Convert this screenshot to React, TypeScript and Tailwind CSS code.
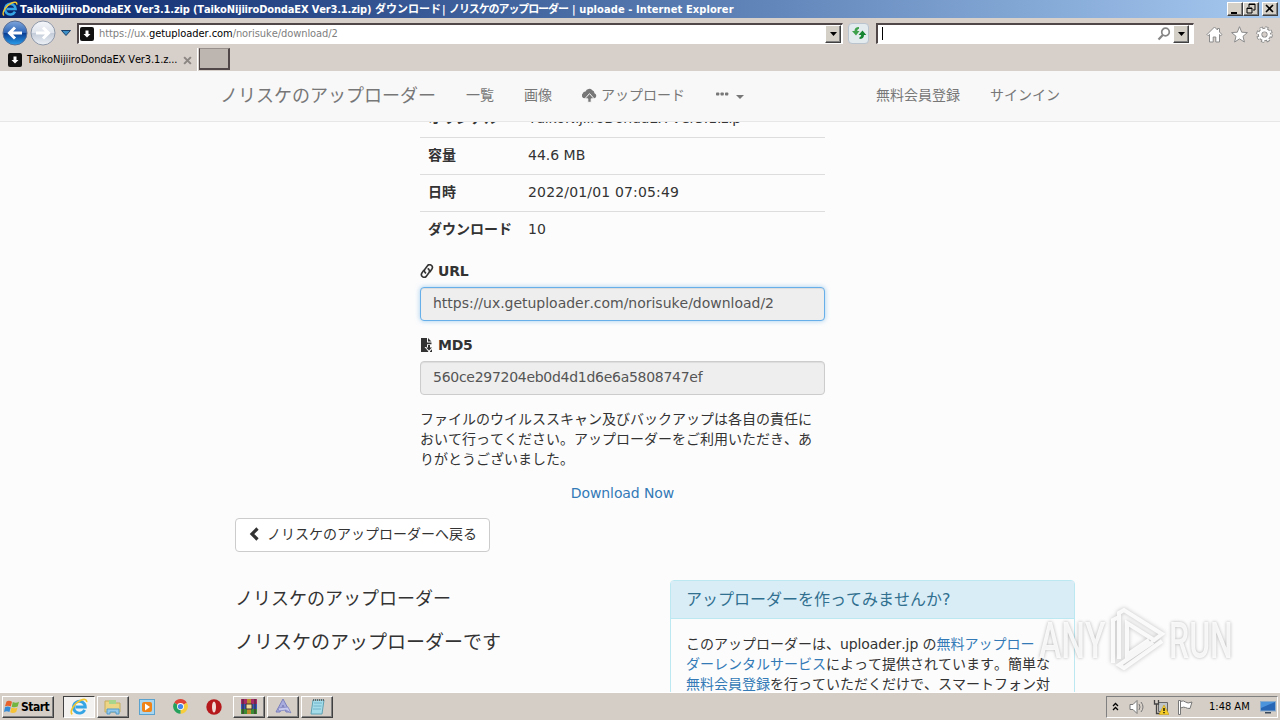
import type { ReactNode } from 'react';

const fileRows = [
  { label: 'オリジナル', value: 'TaikoNijiiroDondaEX Ver3.1.zip', spacing: 'tracking-[-0.15px]' },
  { label: '容量', value: '44.6 MB', spacing: '' },
  { label: '日時', value: '2022/01/01 07:05:49', spacing: 'tracking-[0.16px]' },
  { label: 'ダウンロード', value: '10', spacing: '' },
];

const raised =
  'border border-t-white border-l-white border-r-[#404040] border-b-[#404040] shadow-[inset_-1px_-1px_0_#808080]';

function Favicon() {
  return (
    <svg className="size-[14px] shrink-0" viewBox="0 0 14 14">
      <rect width="14" height="14" rx="2" fill="#111" />
      <path d="M5.500 3.500h3V7h2L7 10.500 3.500 7h2z" fill="#fff" />
    </svg>
  );
}

function IeLogo({ className }: { className: string }) {
  return (
    <svg className={className} viewBox="0 0 20 20">
      <path
        d="M16.3 13.2A6.6 6.6 0 1 1 17 10H6"
        fill="none"
        stroke="#35a5e5"
        strokeWidth="3.2"
      />
      <path
        d="M2.500 18.200C-1 15 5 5.500 12 2.500c3.500-1.500 7-1.500 6.500 2"
        fill="none"
        stroke="#f3c62f"
        strokeWidth="1.8"
      />
    </svg>
  );
}

function NavArrow({ active }: { active?: boolean }) {
  return (
    <svg className="size-[26px] shrink-0" viewBox="0 0 26 26">
      <defs>
        <linearGradient id={active ? 'navOn' : 'navOff'} x1="0" y1="0" x2="0" y2="1">
          <stop offset="0" stopColor={active ? '#7fa6dc' : '#f4f6fa'} />
          <stop offset="0.48" stopColor={active ? '#2f66b8' : '#dfe4ec'} />
          <stop offset="0.52" stopColor={active ? '#0b3f94' : '#c3ccd8'} />
          <stop offset="1" stopColor={active ? '#2aa0ee' : '#eef2f8'} />
        </linearGradient>
      </defs>
      <circle cx="13" cy="13" r="12" fill={active ? 'url(#navOn)' : 'url(#navOff)'} stroke={active ? '#5b6f94' : '#8e98a8'} />
      <path
        d={active ? 'M20 13H8M13 7.500L7.500 13l5.500 5.500' : 'M6 13h12M13 7.500l5.500 5.500-5.500 5.500'}
        fill="none"
        stroke="#fff"
        strokeWidth="3"
      />
    </svg>
  );
}

function DropButton() {
  return (
    <div className={`flex h-[18px] w-4 shrink-0 items-center justify-center bg-[#d4d0c8] ${raised}`}>
      <svg className="h-1 w-[7px]" viewBox="0 0 7 4">
        <path d="M0 0h7L3.500 4z" fill="#000" />
      </svg>
    </div>
  );
}

function WindowButton({ children }: { children: ReactNode }) {
  return (
    <div className={`h-[14px] w-4 bg-[#d4d0c8] ${raised}`}>
      <svg className="h-3 w-[14px]" viewBox="0 0 14 12">{children}</svg>
    </div>
  );
}

function TitleBar() {
  return (
    <div className="flex h-[18px] shrink-0 items-center bg-linear-to-r from-[#0a246a] to-[#a6caf0] pr-[2px] pl-[2px] text-white">
      <IeLogo className="size-4" />
      <div className="ml-[2px] flex pt-px text-[11px] leading-[17px] font-bold whitespace-pre">
        <span className="w-[355px] tracking-[-0.15px]">TaikoNijiiroDondaEX Ver3.1.zip (TaikoNijiiroDondaEX Ver3.1.zip)</span>
        <span className="w-[67px]">ダウンロード</span>
        <span className="w-[7px]">|</span>
        <span className="w-[123px] tracking-[-1.1px]">ノリスケのアップローダー</span>
        <span className="tracking-[0.1px]">| uploade - Internet Explorer</span>
      </div>
      <div className="ml-auto flex">
        <WindowButton><path d="M3 9h6v2H3z" /></WindowButton>
        <WindowButton>
          <path d="M5 1h6v6H9M5 1v3M3 5h5v5H3zM5 1.500h6M3 5.500h5" fill="none" stroke="#000" />
        </WindowButton>
        <div className="ml-[3px]">
          <WindowButton><path d="M3 2l7 7M10 2L3 9" stroke="#000" strokeWidth="1.600" /></WindowButton>
        </div>
      </div>
    </div>
  );
}

function AddressRow() {
  return (
    <div className="flex h-[30px] shrink-0 items-center">
      <div className="flex w-[77px] items-center gap-[2px] pl-[2px]">
        <NavArrow active />
        <NavArrow />
        <svg className="ml-[3px] h-[6px] w-[10px]" viewBox="0 0 10 6">
          <path d="M.5.500h9L5 5.500z" fill="#3c8fc4" stroke="#173f69" />
        </svg>
      </div>
      <div className="flex h-[21px] w-[766px] items-center border-t-2 border-l-2 border-t-[#504848] border-l-[#504848] border-r border-b border-r-white border-b-white bg-white pr-px pl-px">
        <Favicon />
        <div className="ml-[5px] pt-px text-[11px] text-[#808080]">
          <span className="tracking-[-0.07px]">https://ux.</span>
          <span className="text-black tracking-[-0.05px]">getuploader.com</span>
          <span className="tracking-[-0.07px]">/norisuke/download/2</span>
        </div>
        <div className="ml-auto"><DropButton /></div>
      </div>
      <div className="ml-[5px] flex size-[21px] items-center justify-center rounded-sm border border-[#b9c4ce] bg-[#e4ebef]">
        <svg className="size-4" viewBox="0 0 16 16">
          <path d="M8 2Q3.500 2 3.500 6H1l4 4.500L8.500 6H6.200Q6.200 4 8 3.800z" fill="#3fa14c" />
          <path d="M8.500 14Q13 14 13 10h2.300L11.500 5.500 7.500 10h2.700Q10.200 12 8.500 12.200z" fill="#168531" />
        </svg>
      </div>
      <div className="ml-[7px] flex h-[21px] w-[318px] items-center border-t-2 border-l-2 border-t-[#504848] border-l-[#504848] border-r border-b border-r-white border-b-white bg-white pr-1 pl-1">
        <div className="h-[13px] w-px bg-black" />
        <svg className="mr-[2px] ml-auto size-[14px]" viewBox="0 0 14 14" fill="none" stroke="#858585">
          <circle cx="8.500" cy="5" r="3.800" strokeWidth="1.700" />
          <path d="M5.800 8L1.500 12.500" strokeWidth="2.200" />
        </svg>
        <DropButton />
      </div>
      <div className="ml-[12px] flex gap-[8px]">
        <svg className="mt-[3px] size-[17px]" viewBox="0 0 17 17" fill="#fff" stroke="#8b8b8b">
          <path d="M8.500 1L1 8.500l1.200 1.200L3.500 8.500V16h3.700v-5h2.600v5h3.700V8.500l1.300 1.200L16 8.500l-2.500-2.500V2.500h-2V4z" />
        </svg>
        <svg className="mt-[3px] size-[17px]" viewBox="0 0 17 17" fill="#fff" stroke="#8b8b8b">
          <path d="M8.500.7l2.200 5.500 5.700.4-4.400 3.700 1.400 5.700-4.900-3.100L3.600 16 5 10.300.6 6.600l5.700-.4z" />
        </svg>
        <svg className="mt-[3px] size-[17px]" viewBox="0 0 17 17">
          <circle cx="8.500" cy="8.500" r="6.500" fill="none" stroke="#8b8b8b" strokeWidth="3.600" strokeDasharray="2.900 2.200" />
          <circle cx="8.500" cy="8.500" r="4.400" fill="none" stroke="#8b8b8b" strokeWidth="4.500" />
          <circle cx="8.500" cy="8.500" r="6.400" fill="none" stroke="#fff" strokeWidth="2" strokeDasharray="2.100 2.930" />
          <circle cx="8.500" cy="8.500" r="4.400" fill="none" stroke="#fff" strokeWidth="2.600" />
          <circle cx="8.500" cy="8.500" r="2" fill="#d4cdc8" />
        </svg>
      </div>
    </div>
  );
}

function TabRow() {
  return (
    <div className="flex h-[23px] shrink-0">
      <div className="flex w-[198px] items-center border-r border-r-white pt-px pl-2 text-[11px]">
        <Favicon />
        <span className="ml-[5px] w-[156px] tracking-[-0.12px] whitespace-nowrap">TaikoNijiiroDondaEX Ver3.1.z...</span>
        <svg className="size-[9px]" viewBox="0 0 8 8">
          <path d="M1 1l6 6M7 1L1 7" stroke="#8c8683" strokeWidth="1.800" />
        </svg>
      </div>
      <div className="ml-px h-[22px] w-[31px] border border-r-2 border-b-2 border-t-[#968f8c] border-l-[#504848] border-r-[#504848] border-b-[#504848] bg-[#bdb5b0]" />
    </div>
  );
}

function Navbar() {
  return (
    <nav className="h-[51px] shrink-0 border-b border-[#e7e7e7] bg-[#f8f8f8] text-[#777]">
      <div className="mx-auto flex h-[48px] w-[870px] items-center">
        <span className="px-[15px] pt-[2px] text-[18px]">ノリスケのアップローダー</span>
        <span className="px-[15px]">一覧</span>
        <span className="px-[15px]">画像</span>
        <span className="flex items-center px-[15px]">
          <svg className="mr-1 size-[15px]" viewBox="0 0 15 15">
            <path
              d="M3 10.200A2.700 2.700 0 0 1 .8 5.500 2.700 2.700 0 0 1 3.500 3.400 4 4 0 0 1 10.300 2.300 3.500 3.500 0 0 1 12.500 5.200 2.700 2.700 0 0 1 12.700 10.200z"
              fill="currentColor"
            />
            <path
              d="M7.500 5.600l4.700 5.200H9.200v3.500H5.800v-3.500H2.800z"
              fill="currentColor"
              stroke="#f8f8f8"
              strokeWidth="1"
            />
          </svg>
          アップロード
        </span>
        <span className="flex items-center px-[15px]">
          <svg className="-mt-[3px] h-[4px] w-[14px]" viewBox="0 0 14 4" fill="currentColor">
            <rect x="1" y=".500" width="3.300" height="3" rx=".8" />
            <rect x="5.500" y=".500" width="3.300" height="3" rx=".8" />
            <rect x="10" y=".500" width="3.300" height="3" rx=".8" />
          </svg>
          <svg className="mt-[4px] ml-[7px] h-1 w-2" viewBox="0 0 8 4" fill="currentColor">
            <path d="M0 0h8L4 4z" />
          </svg>
        </span>
        <span className="ml-auto px-[15px]">無料会員登録</span>
        <span className="px-[15px]">サインイン</span>
      </div>
    </nav>
  );
}

function Details() {
  return (
    <div className="-mt-[22px] ml-[420px] w-[405px]">
      {fileRows.map((row) => (
        <div key={row.label} className="flex h-[37px] items-start border-t border-[#ddd] px-2 pt-[7px]">
          <span className="w-[100px] font-bold">{row.label}</span>
          <span className={row.spacing}>{row.value}</span>
        </div>
      ))}
      <label className="mt-[13px] flex items-center font-bold tracking-[-0.2px]">
        <svg className="mr-[4px] size-[14px]" viewBox="0 0 14 14" fill="none" stroke="currentColor" strokeWidth="1.600">
          <path d="M6.200 9.300A2.700 2.700 0 0 1 4.900 5.200L7.300 2a2.700 2.700 0 0 1 4.600 3L9.700 8.200" />
          <path d="M7.600 4.600A2.700 2.700 0 0 1 8.900 8.700L6.500 12A2.700 2.700 0 0 1 1.900 9L4 5.900" />
        </svg>
        URL
      </label>
      <div className="mt-[6px] h-[34px] rounded border border-[#66afe9] bg-[#eee] px-3 pt-[5px] tracking-[-0.02px] text-[#555] shadow-[inset_0_1px_1px_rgba(0,0,0,0.075),0_0_5px_rgba(102,175,233,0.6)]">
        https://ux.getuploader.com/norisuke/download/2
      </div>
      <label className="mt-[14px] flex items-center font-bold tracking-[-0.3px]">
        <svg className="mr-[4px] size-[14px]" viewBox="0 0 14 14" fill="currentColor">
          <path d="M1 0h6v4.500h4.500v1.700H7V9H4.500L8.200 13.200V14H1z" />
          <path d="M8 0l3.500 3.500H8zM8 7h2v2.500h2L9 12.500 6 9.500h2zM10 13.200l2-2V14h-2z" />
        </svg>
        MD5
      </label>
      <div className="mt-[6px] h-[34px] rounded border border-[#ccc] bg-[#eee] px-3 pt-[5px] tracking-[-0.28px] text-[#555] shadow-[inset_0_1px_1px_rgba(0,0,0,0.075)]">
        560ce297204eb0d4d1d6e6a5808747ef
      </div>
      <p className="mt-[14px] whitespace-nowrap">
        ファイルのウイルススキャン及びバックアップは各自の責任に<br />
        おいて行ってください。アップローダーをご利用いただき、あ<br />
        りがとうございました。
      </p>
      <p className="mt-[14px] text-center tracking-[-0.1px] text-[#337ab7]">Download Now</p>
    </div>
  );
}

function Footer() {
  return (
    <div className="mt-[15px] ml-[235px] w-[840px]">
      <button className="flex h-[34px] w-[255px] items-center rounded border border-[#ccc] bg-white pb-[2px] pl-3 whitespace-nowrap">
        <svg className="mr-[5px] size-[14px]" viewBox="0 0 14 14" fill="none" stroke="currentColor" strokeWidth="3.200">
          <path d="M9.500 1.500L4 7l5.500 5.500" />
        </svg>
        ノリスケのアップローダーへ戻る
      </button>
      <div className="mt-[28px] flex gap-[30px]">
        <div className="w-[405px] pt-[9px]">
          <h4 className="text-[18px] leading-5">ノリスケのアップローダー</h4>
          <p className="mt-[23px] text-[19px] leading-5">ノリスケのアップローダーです</p>
        </div>
        <div className="h-[200px] w-[405px] rounded border border-[#bce8f1]">
          <h3 className="h-[38px] border-b border-[#bce8f1] bg-[#d9edf7] pt-[9px] pl-[15px] text-[16px] text-[#31708f]">
            アップローダーを作ってみませんか?
          </h3>
          <p className="pt-[15px] pl-[15px] whitespace-nowrap">
            このアップローダーは、<span className="tracking-[-0.1px]">uploader.jp </span>の<a className="text-[#337ab7]">無料アップロー</a><br />
            <a className="text-[#337ab7]">ダーレンタルサービス</a>によって提供されています。簡単な<br />
            <a className="text-[#337ab7]">無料会員登録</a>を行っていただくだけで、スマートフォン対
          </p>
        </div>
      </div>
    </div>
  );
}

function Watermark() {
  return (
    <div className="absolute top-[537px] left-[1039px] flex h-[66px] w-[196px] items-center font-['Roboto'] text-[50px] leading-[66px] font-medium text-white/85 [text-shadow:0_0_4px_rgba(0,0,0,0.3)]">
      <span className="w-[66px] origin-left scale-x-[0.67]">ANY</span>
      <svg className="h-[66px] w-[64px] shrink-0 overflow-visible drop-shadow-[0_0_2px_rgba(0,0,0,0.28)]" viewBox="0 0 64 66" fill="none" stroke="#fff" strokeWidth="4">
        <path d="M8 55V12l6-3v42M14 9V5l5-3 38 24-8 6-27-17v32l6-4M22 15l27 17M57 33L19 60l-5-3 34-23M22 47l22-15" strokeOpacity=".85" />
      </svg>
      <span className="origin-left scale-x-[0.64]">RUN</span>
    </div>
  );
}

function TaskButton({ pressed, children }: { pressed?: boolean; children: ReactNode }) {
  return (
    <div
      className={`flex h-[22px] w-8 items-center justify-center ${
        pressed ? 'border border-t-[#404040] border-l-[#404040] border-r-white border-b-white bg-[#f4f2f0]' : raised
      }`}
    >
      {children}
    </div>
  );
}

function Taskbar() {
  return (
    <div className="flex h-[28px] shrink-0 items-center border-t border-white bg-[#d5cec6] pr-[2px] pl-[2px]">
      <div className={`flex h-[22px] w-[52px] items-center pl-px text-[12px] font-bold tracking-[-0.5px] ${raised}`}>
        <svg className="mr-px size-4" viewBox="0 0 16 16">
          <path d="M2.500 2.500Q5 1 8 2.800L6.800 7.500Q4 6 1 7.300z" fill="#e8622b" />
          <path d="M8.800 3Q12 4.500 15 2.700L13.700 7.500Q10.500 9 7.700 7.700z" fill="#73b541" />
          <path d="M1 8.200Q4 6.800 6.700 8.400L5.400 13Q3 11.700 0 12.900z" fill="#358bd5" />
          <path d="M7.500 8.600Q10.500 10 13.500 8.400L12.200 13Q9 14.700 6.200 13.300z" fill="#f7c336" />
        </svg>
        Start
      </div>
      <div className="ml-[9px] flex items-center gap-[2px]">
        <TaskButton pressed><IeLogo className="size-[18px]" /></TaskButton>
        <TaskButton>
          <svg className="size-[18px]" viewBox="0 0 18 18">
            <path d="M1 3h6l1 2h8v9H1z" fill="#ecd584" stroke="#c6ad5d" />
            <path d="M5 2h7v4H5z" fill="#a6d58b" />
            <path d="M3 16v-5h12v5h-3v-2H6v2z" fill="#93c9ec" stroke="#559bca" />
          </svg>
        </TaskButton>
      </div>
      <div className="flex w-[104px] items-center pl-[10px]">
        <svg className="size-4" viewBox="0 0 16 16">
          <rect x=".500" y=".500" width="15" height="15" fill="#a8d5ef" stroke="#5ba2cf" />
          <rect x="3" y="3" width="10" height="10" rx="2" fill="#f08418" />
          <path d="M6 4.500l5 3.500-5 3.500z" fill="#fff" />
        </svg>
        <svg className="ml-[18px] size-[15px]" viewBox="0 0 16 16">
          <path d="M8 8L1.300 4A7.700 7.700 0 0 1 14.700 4z" fill="#df4437" />
          <path d="M8 8l6.700-4A7.700 7.700 0 0 1 8 15.700z" fill="#f8cd3c" />
          <path d="M8 8v7.700A7.700 7.700 0 0 1 1.300 4z" fill="#26a15c" />
          <circle cx="8" cy="8" r="3.700" fill="#fff" />
          <circle cx="8" cy="8" r="2.800" fill="#4687ec" />
        </svg>
        <svg className="ml-[18px] size-4" viewBox="0 0 16 16">
          <circle cx="8" cy="8" r="7.700" fill="#b5191c" />
          <ellipse cx="8" cy="8" rx="2" ry="5.500" fill="#f1dcd8" />
        </svg>
      </div>
      <div className="flex gap-[2px]">
        <TaskButton>
          <svg className="h-[17px] w-[18px]" viewBox="0 0 18 17">
            <path d="M1 1h16v5H1z" fill="#a82b67" />
            <path d="M1 6h16v5H1z" fill="#3358b7" />
            <path d="M1 11h16v5H1z" fill="#3c8c35" />
            <path d="M7 1h4v15H7z" fill="#bd8c2b" />
            <path d="M6 6h6v5H6z" fill="#f1dd9a" stroke="#433" />
            <path d="M3 1v15M15 1v15" stroke="#3b2530" />
          </svg>
        </TaskButton>
        <TaskButton>
          <svg className="size-[17px]" viewBox="0 0 17 17">
            <path d="M8 1l7 13h-4L8 7l-3 7H1z" fill="#a9addd" stroke="#7b7fbd" />
            <path d="M3 10l10-1 3 6-5-3-7 1z" fill="#c7c9ee" stroke="#7b7fbd" strokeWidth=".7" />
          </svg>
        </TaskButton>
        <TaskButton>
          <svg className="size-[18px]" viewBox="0 0 18 18">
            <path d="M5 2h11l-2 14H3z" fill="#a5dcea" stroke="#5fa2b4" />
            <path d="M6 5h8M5.500 8h8M5 11h8" stroke="#71b4c8" />
            <path d="M5 2h11" stroke="#666" strokeWidth="2" strokeDasharray="1 1" />
          </svg>
        </TaskButton>
      </div>
      <div className="ml-auto flex h-[22px] w-[172px] items-center border border-t-[#808080] border-l-[#808080] border-r-white border-b-white pl-[5px] text-[11px]">
        <svg className="h-[9px] w-[7px]" viewBox="0 0 7 9" fill="none" stroke="#000" strokeWidth="1.300">
          <path d="M1 4l2.500-2.500L6 4M1 8l2.500-2.500L6 8" />
        </svg>
        <svg className="ml-[10px] size-4" viewBox="0 0 16 16" fill="#fff" stroke="#777">
          <path d="M1 5.500h3l4-4v13l-4-4H1z" />
          <path d="M10 5q2 3 0 6M12 3q4 5 0 10" fill="none" />
        </svg>
        <svg className="ml-[8px] size-4" viewBox="0 0 16 16">
          <path d="M5.500 3.500h9v9h-9z" fill="#bfc5c6" stroke="#666" />
          <path d="M1.500 1v4h4V1M3.500 5v9.500h4" fill="none" stroke="#444" strokeWidth="1.300" />
          <path d="M11 6l5 9.500H6z" fill="#f6cd27" stroke="#c59a13" strokeWidth=".6" />
          <path d="M11 9v3M11 13v1.300" stroke="#000" strokeWidth="1.300" />
        </svg>
        <svg className="ml-[8px] size-4" viewBox="0 0 16 16" fill="#fff" stroke="#777">
          <path d="M1.500 1.500h2v14h-2zM3.500 2.500q3-1.500 5 .5t6.500 0l-2 6.500q-3 0-4.500-1t-5 .500z" />
        </svg>
        <span className="ml-[16px] pt-[2px] whitespace-nowrap">1:48 AM</span>
        <svg className="mr-px ml-auto size-4" viewBox="0 0 16 16">
          <rect x=".500" y="2.500" width="15" height="9.500" fill="#2867b5" stroke="#8caccb" />
          <path d="M1 3h14L1 9z" fill="#4c94dc" />
          <path d="M5 13h6v1.500H5z" fill="#39495c" />
        </svg>
      </div>
    </div>
  );
}

export default function App() {
  return (
    <div className="flex h-[720px] w-[1280px] flex-col overflow-hidden bg-[#d6cfca] font-['DejaVu_Sans_Condensed','Noto_Sans_CJK_JP',sans-serif] text-black [font-kerning:none]">
      <TitleBar />
      <AddressRow />
      <TabRow />
      <div className="relative flex h-[621px] shrink-0 flex-col overflow-hidden bg-[#fcfcfc] font-['DejaVu_Sans','Noto_Sans_CJK_JP',sans-serif] text-[14px] leading-5 text-[#333]">
        <Navbar />
        <div className="h-[570px] overflow-hidden">
          <Details />
          <Footer />
        </div>
        <Watermark />
      </div>
      <Taskbar />
    </div>
  );
}
